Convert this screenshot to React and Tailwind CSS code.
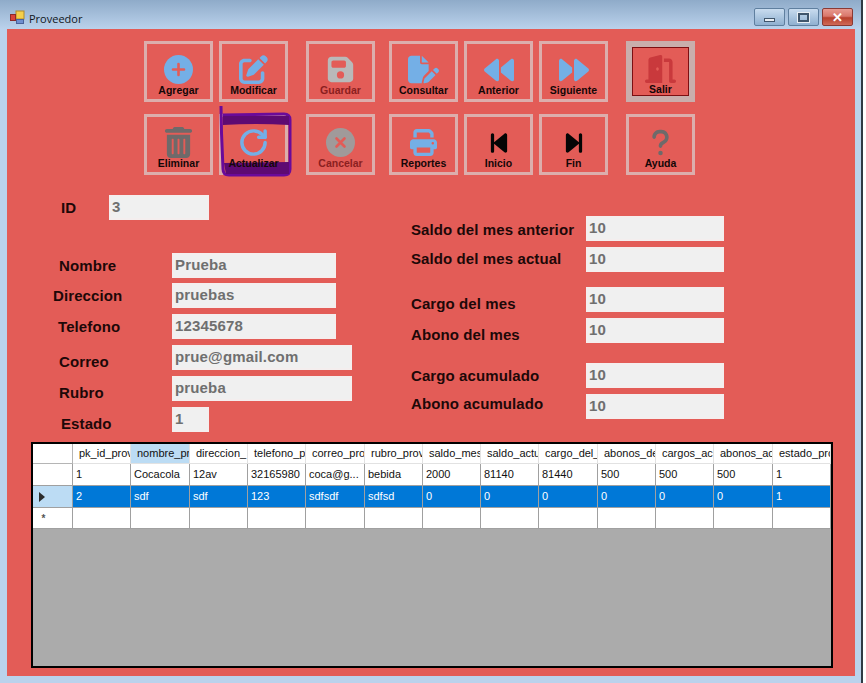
import React from 'react';
import {
  FaPenToSquare, FaFloppyDisk, FaFilePen, FaBackward, FaForward, FaDoorOpen,
  FaTrashCan, FaPrint, FaBackwardStep, FaForwardStep, FaQuestion,
} from 'react-icons/fa6';
import { RotateCw } from 'lucide-react';

const BLUE = '#74afe6';

// circle with a small mark, the package icons have a much larger plus / cross
const CircleMark = ({ fill, d }) => (
  <svg width="29" height="29" viewBox="0 0 29 29">
    <circle cx="14.5" cy="14.5" r="14.5" fill={fill} />
    <path d={d} stroke="#e35c57" strokeWidth="2.6" strokeLinecap="round" fill="none" />
  </svg>
);

const topRow = [
  { label: 'Agregar', icon: <CircleMark fill={BLUE} d="M14.5 9 V20 M9 14.5 H20" />, gap: 'ml-0' },
  { label: 'Modificar', icon: <FaPenToSquare size={29} color={BLUE} />, gap: 'ml-[6px]' },
  { label: 'Guardar', icon: <FaFloppyDisk size={29} color="#b9b9b9" />, gap: 'ml-[18px]', disabled: true },
  { label: 'Consultar', icon: <FaFilePen size={31} color={BLUE} />, gap: 'ml-[14px]' },
  { label: 'Anterior', icon: <FaBackward size={30} color={BLUE} />, gap: 'ml-[6px]' },
  { label: 'Siguiente', icon: <FaForward size={30} color={BLUE} />, gap: 'ml-[6px]' },
];

const bottomRow = [
  { label: 'Eliminar', icon: <FaTrashCan size={31} color="#6e6a6a" />, gap: 'ml-0' },
  { label: 'Actualizar', icon: <RotateCw size={31} strokeWidth={2.7} color={BLUE} />, gap: 'ml-[6px]', marked: true },
  { label: 'Cancelar', icon: <CircleMark fill="#a09a9a" d="M10.5 10.5 L18.5 18.5 M18.5 10.5 L10.5 18.5" />, gap: 'ml-[18px]', disabled: true },
  { label: 'Reportes', icon: <FaPrint size={27} color={BLUE} />, gap: 'ml-[14px]' },
  { label: 'Inicio', icon: <FaBackwardStep size={26} color="#050505" />, gap: 'ml-[6px]' },
  { label: 'Fin', icon: <FaForwardStep size={26} color="#050505" />, gap: 'ml-[6px]' },
  { label: 'Ayuda', icon: <FaQuestion size={29} color="#6e6a6a" />, gap: 'ml-[18px]' },
];

const leftFields = [
  { label: 'Nombre', value: 'Prueba', mt: 'mt-0', pad: 'pl-[52px]', width: 'w-[164px]' },
  { label: 'Direccion', value: 'pruebas', mt: 'mt-[5px]', pad: 'pl-[46px]', width: 'w-[164px]' },
  { label: 'Telefono', value: '12345678', mt: 'mt-[6px]', pad: 'pl-[51px]', width: 'w-[164px]' },
  { label: 'Correo', value: 'prue@gmail.com', mt: 'mt-[6px]', pad: 'pl-[52px] pt-[8px]', width: 'w-[180px]' },
  { label: 'Rubro', value: 'prueba', mt: 'mt-[6px]', pad: 'pl-[52px] pt-[8px]', width: 'w-[180px]' },
  { label: 'Estado', value: '1', mt: 'mt-[6px]', pad: 'pl-[54px] pt-[8px]', width: 'w-[37px]' },
];

const rightFields = [
  { label: 'Saldo del mes anterior', mt: 'mt-0', pad: 'pt-[2px]' },
  { label: 'Saldo del mes actual', mt: 'mt-[6px]', pad: 'pb-[2px]' },
  { label: 'Cargo del mes', mt: 'mt-[15px]', pad: 'pt-[8px]' },
  { label: 'Abono del mes', mt: 'mt-[6px]', pad: 'pt-[8px]' },
  { label: 'Cargo acumulado', mt: 'mt-[20px]', pad: '' },
  { label: 'Abono acumulado', mt: 'mt-[6px]', pad: 'pb-[6px]' },
];

const columns = [
  'pk_id_prov', 'nombre_pr', 'direccion_', 'telefono_p', 'correo_pro', 'rubro_prov', 'saldo_mes',
  'saldo_actu', 'cargo_del_', 'abonos_de', 'cargos_ac', 'abonos_ac', 'estado_pro',
];

const rows = [
  ['1', 'Cocacola', '12av', '32165980', 'coca@g...', 'bebida', '2000', '81140', '81440', '500', '500', '500', '1'],
  ['2', 'sdf', 'sdf', '123', 'sdfsdf', 'sdfsd', '0', '0', '0', '0', '0', '0', '1'],
  ['', '', '', '', '', '', '', '', '', '', '', '', ''],
];

const gridCols = 'grid grid-cols-[40px_58px_59px_58px_58px_59px_58px_58px_58px_59px_58px_58px_59px_58px]';

const Marker = () => (
  <svg className="absolute left-[-6px] top-[-14px] pointer-events-none" width="80" height="78" viewBox="0 0 80 78">
    <path d="M5 3 L5.5 30 L7 66 Q7 72 13 72 L68 72 Q74 72 74 66 L74 17 Q74 11 68 11 L7 12" fill="none" stroke="#6a0a9a" strokeWidth="3" strokeLinejoin="round" />
    <path d="M7 13 L73 13 L73 22 Q40 20 7 22 Z" fill="#5e0a72" />
    <path d="M8 60 L73 59 L73 71 L10 71 Z" fill="#5e0a72" />
  </svg>
);

const ToolButton = ({ label, icon, gap, disabled, marked }) => (
  <button className={`relative w-[69px] h-[61px] flex flex-col items-center border-[3px] border-[#dcaeac] pt-[11px] ${gap}`}>
    {marked && <Marker />}
    <span className="relative h-[29px] flex items-center justify-center">{icon}</span>
    <span className={`relative text-[10.5px] leading-[13px] font-bold ${disabled ? 'text-[#8b1f20]' : 'text-[#140707]'}`}>{label}</span>
  </button>
);

const SalirButton = () => (
  <button className="w-[69px] h-[61px] ml-[18px] border-[6px] border-[#c9aeac]">
    <div className="h-full flex flex-col items-center border border-[#7d0f12] pt-[7px]">
      <span className="h-[29px] flex items-center justify-center">
        <FaDoorOpen color="#c9393c" className="w-[31px] h-[28px]" preserveAspectRatio="none" />
      </span>
      <span className="text-[10.5px] leading-[13px] font-bold text-[#140707]">Salir</span>
    </div>
  </button>
);

const Field = ({ value, width }) => (
  <input
    readOnly
    value={value}
    className={`h-[25px] ${width} shrink-0 bg-[#f0f0f0] border-2 border-[#f4eeee] pl-[1px] pb-[2px] text-[15px] tracking-[0.15px] font-bold text-[#6f6f6f] outline-none`}
  />
);

const Caption = ({ children, className }) => (
  <div className={`w-[31px] h-[18px] flex items-center justify-center rounded-[2px] border border-[#5f7f9f] ${className}`}>
    {children}
  </div>
);

export default function App() {
  return (
    <div className="w-[866px] h-[683px] bg-white overflow-hidden font-['Liberation_Sans',Arial,sans-serif]">
      <div className="w-[863px] h-full flex flex-col border-r-2 border-[#2e3a44] bg-[#bad2ec]">
        {/* title bar */}
        <div className="h-[29px] shrink-0 flex items-start bg-gradient-to-b from-[#8fabc9] to-[#bad2ec] pl-[10px] pr-[8px]">
          <svg className="mt-[10px]" width="15" height="15" viewBox="0 0 15 15">
            <rect x="6" y="1" width="8" height="8" fill="#f5cf4a" stroke="#b08a2a" />
            <rect x="0.5" y="4.5" width="5" height="6" fill="#d9433a" stroke="#8c2a2a" />
            <rect x="6.5" y="9.5" width="7" height="4" fill="#6f8fd0" stroke="#4a629a" />
          </svg>
          <span className="mt-[10px] ml-[4px] text-[11px] leading-[17px] text-[#10161c] font-['Open_Sans',sans-serif]">Proveedor</span>
          <div className="ml-auto mt-[8px] flex gap-[3px]">
            <Caption className="bg-gradient-to-b from-[#c9dcef] to-[#8fb0d0]">
              <div className="w-[11px] h-[4px] mt-[6px] bg-[#e8eef4] border border-[#40566c]" />
            </Caption>
            <Caption className="bg-gradient-to-b from-[#c9dcef] to-[#8fb0d0]">
              <div className="w-[11px] h-[9px] bg-transparent border-2 border-[#40566c] outline outline-[#e8eef4]" />
            </Caption>
            <Caption className="bg-[linear-gradient(#e89a90_0%,#d9776b_45%,#b8402c_55%,#cf6a58_100%)] border-[#8a3a34] text-[13px] leading-none font-bold text-white">
              ✕
            </Caption>
          </div>
        </div>

        {/* form */}
        <div className="ml-[7px] w-[848px] h-[647px] shrink-0 flex flex-col bg-[#e35c57]">
          <div className="pt-[12px] pl-[137px] flex flex-col gap-[12px]">
            <div className="flex">
              {topRow.map((b) => <ToolButton key={b.label} {...b} />)}
              <SalirButton />
            </div>
            <div className="flex">
              {bottomRow.map((b) => <ToolButton key={b.label} {...b} />)}
            </div>
          </div>

          <div className="flex text-[15px] leading-[17px] tracking-[0.1px] font-bold text-[#1d0808]">
            <div className="w-[404px] shrink-0 pt-[20px]">
              <div className="flex">
                <span className="w-[102px] shrink-0 pl-[54px] pb-[1px] flex items-center">ID</span>
                <Field value="3" width="w-[100px]" />
              </div>
              <div className="mt-[33px]">
                {leftFields.map((f) => (
                  <div key={f.label} className={`flex h-[25px] ${f.mt}`}>
                    <span className={`w-[165px] shrink-0 flex items-center ${f.pad}`}>{f.label}</span>
                    <Field value={f.value} width={f.width} />
                  </div>
                ))}
              </div>
            </div>
            <div className="pt-[41px]">
              {rightFields.map((f) => (
                <div key={f.label} className={`flex h-[25px] ${f.mt}`}>
                  <span className={`w-[175px] shrink-0 flex items-center ${f.pad}`}>{f.label}</span>
                  <Field value="10" width="w-[138px]" />
                </div>
              ))}
            </div>
          </div>

          {/* data grid */}
          <div className="mt-[10px] ml-[24px] w-[802px] h-[226px] border-2 border-black bg-[#ababab] text-[11px] leading-none text-[#111]">
            <div className={`${gridCols} h-[20px] bg-white`}>
              <div className="border-r border-b border-[#b5b5b5]" />
              {columns.map((c) => (
                <div
                  key={c}
                  className={`overflow-hidden whitespace-nowrap pl-[6px] flex items-center border-r border-b border-[#e2e2e2] ${c === 'nombre_pr' ? 'bg-[#bcdcf4]' : ''}`}
                >
                  {c}
                </div>
              ))}
            </div>
            {rows.map((row, i) => (
              <div
                key={i}
                className={`${gridCols} ${i === 2 ? 'h-[21px]' : 'h-[22px]'} ${i === 1 ? 'bg-[#0078d7] text-white' : 'bg-white'}`}
              >
                <div className={`flex items-center justify-center border-r border-b border-[#a0a0a0] text-[#222] ${i === 1 ? 'bg-[#bcdcf4]' : 'bg-white'}`}>
                  {i === 1 && (
                    <svg width="6" height="10" viewBox="0 0 6 10" className="mr-[22px]"><path d="M0 0 L6 5 L0 10 Z" fill="#2c2c2c" /></svg>
                  )}
                  {i === 2 && <span className="mr-[18px] mt-[1px] text-[10px] font-bold leading-none text-[#555]">*</span>}
                </div>
                {row.map((cell, j) => (
                  <div key={j} className="overflow-hidden whitespace-nowrap pl-[3px] flex items-center border-r border-b border-[#a0a0a0]">
                    {cell}
                  </div>
                ))}
              </div>
            ))}
          </div>
        </div>
      </div>
    </div>
  );
}
